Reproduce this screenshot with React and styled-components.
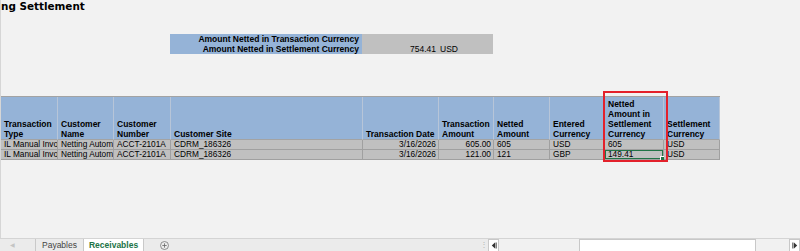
import styled, { createGlobalStyle } from 'styled-components'

const GlobalStyle = createGlobalStyle`
  html, body {
    margin: 0;
    padding: 0;
    background: #f2f2f2;
  }
  body {
    width: 800px;
    height: 251px;
    overflow: hidden;
    font-family: "Liberation Sans", Arial, sans-serif;
  }
`

const COLUMNS = '57px 56px 57px 192px 76px 55px 56px 55px 59px 56px'

const Window = styled.div`
  width: 800px;
  height: 251px;
  display: flex;
  flex-direction: column;
  background: #f2f2f2;
  overflow: hidden;
`

const Sheet = styled.main`
  height: 238px;
  display: flex;
  flex-direction: column;
  border-left: 1px solid #d6d6d6;
  box-sizing: border-box;
`

const Title = styled.h1`
  margin: 0;
  height: 13px;
  font-family: "DejaVu Sans", Verdana, sans-serif;
  font-size: 10.4px;
  font-weight: bold;
  line-height: 13px;
  color: #000;
  white-space: nowrap;
`

const Summary = styled.section`
  display: grid;
  grid-template-columns: 192px 76px 55px;
  grid-auto-rows: 10px;
  margin: 21px 0 0 169px;
  font-size: 8.5px;
  line-height: 10px;
`

const SummaryLabel = styled.div`
  background: #95b3d7;
  font-weight: bold;
  text-align: right;
  padding-right: 3px;
  white-space: nowrap;
  color: #000;
`

const SummaryValue = styled.div`
  background: #c0c0c0;
  text-align: ${({ align }) => align || 'left'};
  padding: 0 2px;
  color: #000;
  white-space: nowrap;
`

const TableWrap = styled.section`
  position: relative;
  margin-top: 42px;
  width: 719px;
`

const Table = styled.div`
  display: grid;
  grid-template-columns: ${COLUMNS};
  grid-template-rows: 43px 10px 10px;
  border-top: 1px solid #a3a3a3;
  font-size: 8.5px;
  color: #000;
`

const HeadCell = styled.div`
  display: flex;
  align-items: flex-end;
  background: #95b3d7;
  border-right: 1px solid #b7c5d8;
  border-bottom: 1px solid #a3a3a3;
  padding: 0 2px 0 3px;
  box-sizing: border-box;
  font-weight: bold;
  line-height: 10px;
  overflow: hidden;
  justify-content: ${({ align }) => (align === 'right' ? 'flex-end' : 'flex-start')};
`

const Cell = styled.div`
  position: relative;
  background: #c0c0c0;
  border-right: 1px solid #a0a0a0;
  border-bottom: 1px solid #a0a0a0;
  box-sizing: border-box;
  padding: 0 2px 0 ${({ align }) => (align === 'right' ? '2px' : '3px')};
  line-height: 9px;
  font-size: 8.3px;
  white-space: nowrap;
  overflow: hidden;
  text-align: ${({ align }) => align || 'left'};
  ${({ active }) =>
    active &&
    `
    box-shadow: inset 0 0 0 1px #217346;
    overflow: visible;
    &::after {
      content: '';
      position: absolute;
      right: -2px;
      bottom: -2px;
      width: 3px;
      height: 3px;
      background: #217346;
      border: 1px solid #fff;
    }
  `}
`

const Highlight = styled.div`
  position: absolute;
  left: 602px;
  top: -5px;
  width: 65px;
  height: 71px;
  border: 2px solid #e3212b;
  box-sizing: border-box;
  pointer-events: none;
`

const TabBar = styled.footer`
  height: 13px;
  display: flex;
  border-top: 1px solid #d4d4d4;
  box-sizing: border-box;
  font-size: 8.5px;
  line-height: 12px;
`

const TabStrip = styled.div`
  width: 488px;
  display: flex;
  background: #ebebeb;
`

const NavArrow = styled.div`
  width: 35px;
  padding-left: 10px;
  box-sizing: border-box;
  color: #c4c4c4;
  font-size: 6px;
`

const Tab = styled.div`
  padding: 0 6px;
  border-left: 1px solid #c9c9c9;
  white-space: nowrap;
  color: ${({ active }) => (active ? '#217346' : '#444')};
  font-weight: ${({ active }) => (active ? 'bold' : 'normal')};
  background: ${({ active }) => (active ? '#fff' : 'transparent')};
  ${({ active }) => active && 'border-right: 1px solid #c9c9c9; padding: 0 5px;'}
`

const AddButton = styled.div`
  margin-left: 16px;
  display: flex;
  align-items: center;
`

const Grip = styled.div`
  margin-left: auto;
  width: 8px;
  color: #b5b5b5;
  font-size: 8px;
`

const ScrollArea = styled.div`
  flex: 1;
  display: flex;
  background: #f1f1f1;
`

const ScrollButton = styled.div`
  width: 11px;
  background: #fff;
  border: 1px solid #c8c8c8;
  border-bottom: none;
  box-sizing: border-box;
  display: flex;
  align-items: center;
  justify-content: center;
  margin-left: ${({ right }) => (right ? 'auto' : '0')};
`

const Thumb = styled.div`
  margin-left: 80px;
  width: 177px;
  background: #fff;
  border: 1px solid #c8c8c8;
  border-bottom: none;
  box-sizing: border-box;
`

const headers = [
  { label: 'Transaction Type' },
  { label: 'Customer Name' },
  { label: 'Customer Number' },
  { label: 'Customer Site' },
  { label: 'Transaction Date' },
  { label: 'Transaction Amount' },
  { label: 'Netted Amount' },
  { label: 'Entered Currency' },
  { label: 'Netted Amount in Settlement Currency' },
  { label: 'Settlement Currency' },
]

const rows = [
  ['IL Manual Invoice', 'Netting Automation', 'ACCT-2101A', 'CDRM_186326', '3/16/2026', '605.00', '605', 'USD', '605', 'USD'],
  ['IL Manual Invoice', 'Netting Automation', 'ACCT-2101A', 'CDRM_186326', '3/16/2026', '121.00', '121', 'GBP', '149.41', 'USD'],
]

const rightAligned = [4, 5]

const Arrow = ({ dir }) => (
  <svg width="6" height="7" viewBox="0 0 6 7">
    {dir === 'left' ? (
      <>
        <path d="M4 0.5 L0.8 3.5 L4 6.5 Z" fill="#333" />
        <rect x="4.6" y="0.5" width="1" height="6" fill="#333" />
      </>
    ) : (
      <>
        <rect x="0.4" y="0.5" width="1" height="6" fill="#333" />
        <path d="M2 0.5 L5.2 3.5 L2 6.5 Z" fill="#333" />
      </>
    )}
  </svg>
)

export default function App() {
  return (
    <Window>
      <GlobalStyle />
      <Sheet>
        <Title>ng Settlement</Title>
        <Summary>
          <SummaryLabel>Amount Netted in Transaction Currency</SummaryLabel>
          <SummaryValue />
          <SummaryValue />
          <SummaryLabel>Amount Netted in Settlement Currency</SummaryLabel>
          <SummaryValue align="right">754.41</SummaryValue>
          <SummaryValue>USD</SummaryValue>
        </Summary>
        <TableWrap>
          <Table>
            {headers.map((h) => (
              <HeadCell key={h.label}>
                <span>{h.label}</span>
              </HeadCell>
            ))}
            {rows.map((row, r) =>
              row.map((value, c) => (
                <Cell
                  key={`${r}-${c}`}
                  align={rightAligned.includes(c) ? 'right' : 'left'}
                  active={r === 1 && c === 8}
                >
                  {value}
                </Cell>
              ))
            )}
          </Table>
          <Highlight />
        </TableWrap>
      </Sheet>
      <TabBar>
        <TabStrip>
          <NavArrow>◀</NavArrow>
          <Tab>Payables</Tab>
          <Tab active>Receivables</Tab>
          <AddButton>
            <svg width="9" height="9" viewBox="0 0 9 9">
              <circle cx="4.5" cy="4.5" r="4" fill="none" stroke="#777" strokeWidth="0.8" />
              <path d="M4.5 2.3 V6.7 M2.3 4.5 H6.7" stroke="#666" strokeWidth="0.8" />
            </svg>
          </AddButton>
          <Grip>⋮</Grip>
        </TabStrip>
        <ScrollArea>
          <ScrollButton>
            <Arrow dir="left" />
          </ScrollButton>
          <Thumb />
          <ScrollButton right>
            <Arrow dir="right" />
          </ScrollButton>
        </ScrollArea>
      </TabBar>
    </Window>
  )
}
